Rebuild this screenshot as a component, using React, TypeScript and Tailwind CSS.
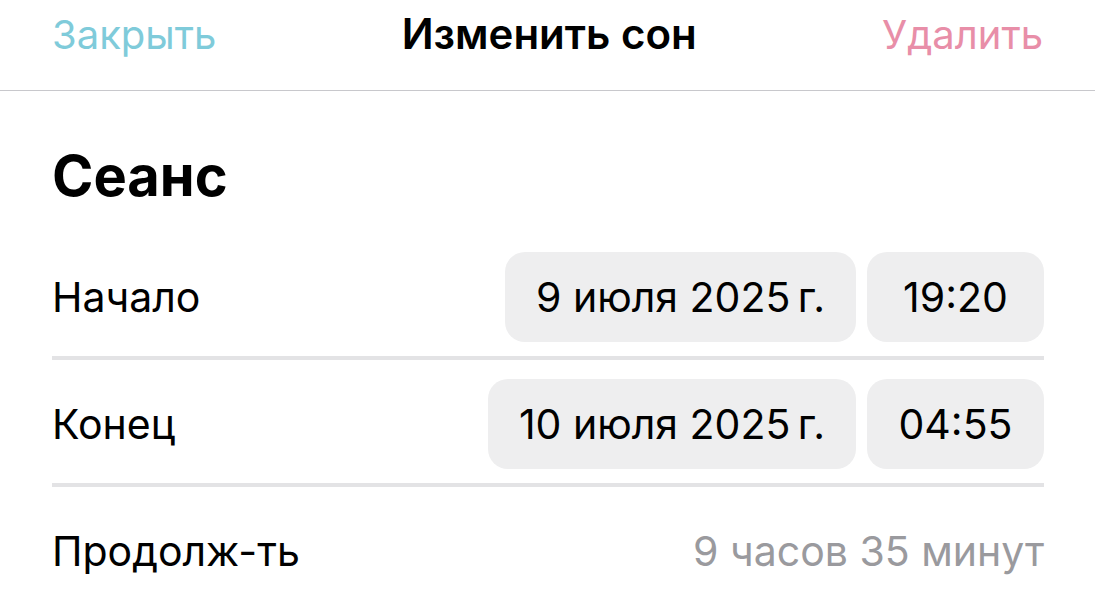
import React from 'react';

const font = { fontFamily: 'Inter, "Noto Sans", sans-serif' };

function Pill({ children, className = '' }: { children: React.ReactNode; className?: string }) {
  return (
    <div className={`flex h-[90px] items-center justify-center rounded-[20px] bg-[#eeeeef] text-[41px] leading-none text-black ${className}`}>
      {children}
    </div>
  );
}

function Row({ label, children, last = false }: { label: string; children: React.ReactNode; last?: boolean }) {
  return (
    <div className={`flex items-center justify-between pt-[19px] pb-[14px] ${last ? '' : 'border-b-4 border-[#e3e3e5]'}`}>
      <span className="text-[41px] leading-none text-black">{label}</span>
      <div className="flex h-[90px] items-center gap-[11px]">{children}</div>
    </div>
  );
}

export default function App() {
  return (
    <div style={font} className="h-[600px] w-[1095px] overflow-hidden bg-white">
      {/* nav bar */}
      <header className="flex h-[91px] items-baseline justify-between border-b border-[#c8c8cc] px-[52px] pt-[13px] leading-none">
        <button className="text-[40px] text-[#7fcbda]">Закрыть</button>
        <h1 className="text-[42px] font-semibold text-black">Изменить сон</h1>
        <button className="text-[40px] text-[#e88ea8]">Удалить</button>
      </header>

      <div className="pl-[52px] pr-[51px]">
        <h2 className="mt-[57px] mb-[29px] text-[56px] font-bold leading-none text-black">Сеанс</h2>

        <Row label="Начало">
          <Pill className="px-[31px]">9 июля 2025{'\u202F'}г.</Pill>
          <Pill className="w-[177px]">19:20</Pill>
        </Row>
        <Row label="Конец">
          <Pill className="px-[31px]">10 июля 2025{'\u202F'}г.</Pill>
          <Pill className="w-[177px]">04:55</Pill>
        </Row>
        <Row label="Продолж-ть" last>
          <span className="text-[41px] leading-none text-[#9a9a9e]">9 часов 35 минут</span>
        </Row>
      </div>
    </div>
  );
}
